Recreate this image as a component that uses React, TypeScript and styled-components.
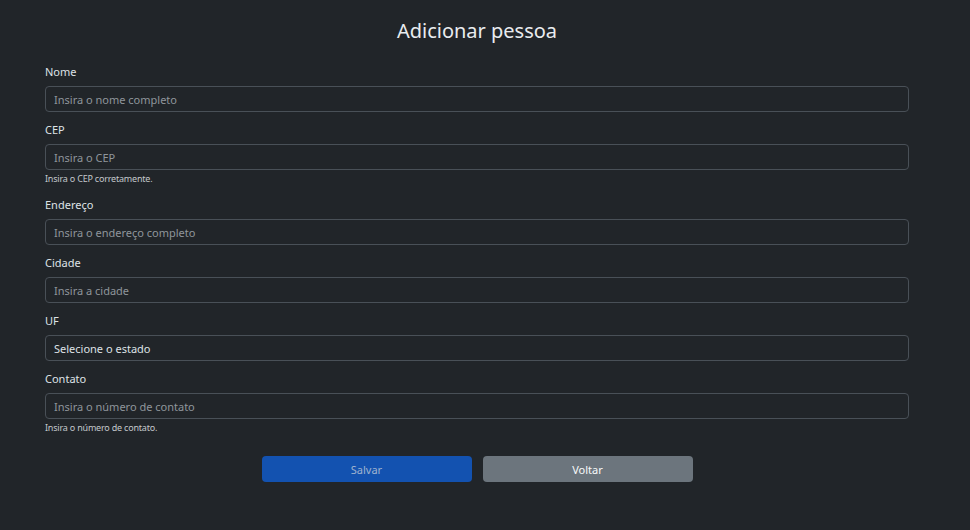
import React from "react";
import styled, { createGlobalStyle } from "styled-components";

const Global = createGlobalStyle`
  html, body { margin: 0; padding: 0; background: #212529; }
  body { font-family: "Noto Sans", "Open Sans", sans-serif; color: #dee2e6; }
  * { box-sizing: border-box; }
`;

const Page = styled.div`
  width: 970px;
  min-height: 530px;
  background: #212529;
  padding: 14px 0 0 45px;
`;

const Container = styled.div`
  width: 864px;
  display: flex;
  flex-direction: column;
`;

const Title = styled.h1`
  margin: 0 0 16px;
  text-align: center;
  font-size: 20px;
  font-weight: 400;
  line-height: 34px;
  color: #e9ecef;
`;

const Group = styled.div`
  display: flex;
  flex-direction: column;
  margin-bottom: 10px;
`;

const Label = styled.label`
  font-size: 11px;
  line-height: 16px;
  margin-bottom: 6px;
  color: #dee2e6;
`;

const Input = styled.input`
  height: 26px;
  width: 100%;
  background: #212529;
  border: 1px solid #495057;
  border-radius: 4px;
  padding: 0 8px;
  font-family: inherit;
  font-size: 11px;
  color: #dee2e6;
  outline: none;
  &::placeholder { color: #8f959b; }
`;

const Select = styled.div`
  height: 26px;
  width: 100%;
  border: 1px solid #495057;
  border-radius: 4px;
  padding: 0 8px;
  font-size: 11px;
  display: flex;
  align-items: center;
  color: #dee2e6;
`;

const Help = styled.div`
  font-size: 9px;
  line-height: 14px;
  margin-top: 2px;
  margin-bottom: 1px;
  letter-spacing: -0.2px;
  color: #c4c8cc;
`;

const Buttons = styled.div`
  display: flex;
  justify-content: center;
  gap: 11px;
  margin-top: 10px;
`;

const Button = styled.button<{ $variant: "primary" | "secondary" }>`
  width: 210px;
  height: 26px;
  border: none;
  border-radius: 4px;
  font-family: inherit;
  font-size: 11px;
  font-weight: 400;
  background: ${(p) => (p.$variant === "primary" ? "#1352b0" : "#6c757d")};
  color: ${(p) => (p.$variant === "primary" ? "#9fb2cf" : "#f8f9fa")};
`;

export default function App() {
  return (
    <>
      <Global />
      <Page>
        <Container>
          <Title>Adicionar pessoa</Title>
          <Group>
            <Label>Nome</Label>
            <Input placeholder="Insira o nome completo" />
          </Group>
          <Group>
            <Label>CEP</Label>
            <Input placeholder="Insira o CEP" />
            <Help>Insira o CEP corretamente.</Help>
          </Group>
          <Group>
            <Label>Endereço</Label>
            <Input placeholder="Insira o endereço completo" />
          </Group>
          <Group>
            <Label>Cidade</Label>
            <Input placeholder="Insira a cidade" />
          </Group>
          <Group>
            <Label>UF</Label>
            <Select>Selecione o estado</Select>
          </Group>
          <Group>
            <Label>Contato</Label>
            <Input placeholder="Insira o número de contato" />
            <Help>Insira o número de contato.</Help>
          </Group>
          <Buttons>
            <Button $variant="primary">Salvar</Button>
            <Button $variant="secondary">Voltar</Button>
          </Buttons>
        </Container>
      </Page>
    </>
  );
}
